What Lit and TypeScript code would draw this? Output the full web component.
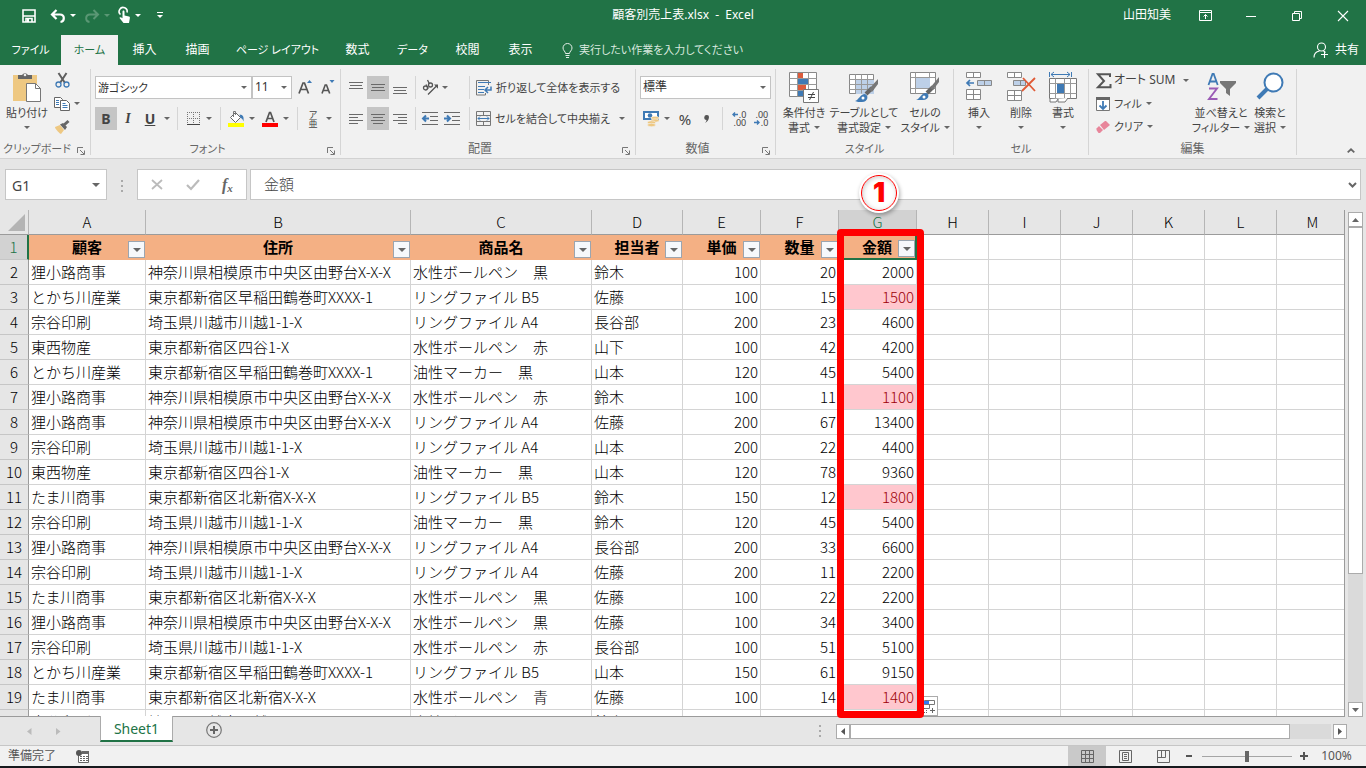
import { LitElement, html, css, svg } from 'lit';
import { customElement, state } from 'lit/decorators.js';
import { classMap } from 'lit/directives/class-map.js';

type Row = [string, string, string, string, number, number, number];

const MINO = '狸小路商事';
const TOKA = 'とかち川産業';
const SOYA = '宗谷印刷';
const TOZAI = '東西物産';
const TAMA = 'たま川商事';
const KANAGAWA = '神奈川県相模原市中央区由野台X-X-X';
const WASEDA = '東京都新宿区早稲田鶴巻町XXXX-1';
const KAWAGOE = '埼玉県川越市川越1-1-X';
const YOTSUYA = '東京都新宿区四谷1-X';
const KITA = '東京都新宿区北新宿X-X-X';

const HEADERS = ['顧客', '住所', '商品名', '担当者', '単価', '数量', '金額'];
const COLUMNS = ['A', 'B', 'C', 'D', 'E', 'F', 'G', 'H', 'I', 'J', 'K', 'L', 'M'];

const ROWS: Row[] = [
  [MINO, KANAGAWA, '水性ボールペン　黒', '鈴木', 100, 20, 2000],
  [TOKA, WASEDA, 'リングファイル B5', '佐藤', 100, 15, 1500],
  [SOYA, KAWAGOE, 'リングファイル A4', '長谷部', 200, 23, 4600],
  [TOZAI, YOTSUYA, '水性ボールペン　赤', '山下', 100, 42, 4200],
  [TOKA, WASEDA, '油性マーカー　黒', '山本', 120, 45, 5400],
  [MINO, KANAGAWA, '水性ボールペン　赤', '鈴木', 100, 11, 1100],
  [MINO, KANAGAWA, 'リングファイル A4', '佐藤', 200, 67, 13400],
  [SOYA, KAWAGOE, 'リングファイル A4', '山本', 200, 22, 4400],
  [TOZAI, YOTSUYA, '油性マーカー　黒', '山本', 120, 78, 9360],
  [TAMA, KITA, 'リングファイル B5', '鈴木', 150, 12, 1800],
  [SOYA, KAWAGOE, '油性マーカー　黒', '鈴木', 120, 45, 5400],
  [MINO, KANAGAWA, 'リングファイル A4', '長谷部', 200, 33, 6600],
  [SOYA, KAWAGOE, 'リングファイル A4', '佐藤', 200, 11, 2200],
  [TAMA, KITA, '水性ボールペン　黒', '佐藤', 100, 22, 2200],
  [MINO, KANAGAWA, '水性ボールペン　黒', '佐藤', 100, 34, 3400],
  [SOYA, KAWAGOE, '水性ボールペン　赤', '長谷部', 100, 51, 5100],
  [TOKA, WASEDA, 'リングファイル B5', '山本', 150, 61, 9150],
  [TAMA, KITA, '水性ボールペン　青', '佐藤', 100, 14, 1400],
  [SOYA, KAWAGOE, '水性ボールペン　黒', '鈴木', 100, 33, 3300],
];

const G = '#6a6a6a';
const B = '#3f7ab5';

const icon = (w: number, h: number, body: unknown) =>
  html`<svg width=${w} height=${h} viewBox="0 0 ${w} ${h}" fill="none" aria-hidden="true">${body}</svg>`;

const caret = html`<svg class="caret" width="6" height="3" viewBox="0 0 6 3" aria-hidden="true"><path d="M0 0h6L3 3z" fill="currentColor"/></svg>`;

const lines = (spec: [number, number, number][]) =>
  svg`${spec.map(([x, y, w]) => svg`<path d="M${x} ${y}.5h${w}" stroke=${G}/>`)}`;

const launcherIcon = icon(8, 8, svg`<path d="M.5 6V.5H6M3 3l4 4M7.5 3.5v4h-4" stroke="#777"/>`);

const icons = {
  save: icon(14, 14, svg`<path d="M1 1h12v12H1z" stroke="#fff" stroke-width="1.6"/><path d="M1 7h12M4 13v-3.500h6V13" stroke="#fff" stroke-width="1.6"/><path d="M5 10h2v3H5z" fill="#fff"/>`),
  undo: icon(16, 14, svg`<path d="M6.500 1 2 5.500 6.500 10M2.500 5.500H10c5 0 5 7 .5 7.500" stroke="#fff" stroke-width="2.200"/>`),
  redo: icon(16, 14, svg`<path d="M9.500 1 14 5.500 9.500 10M13.500 5.500H6c-5 0-5 7-.5 7.500" stroke="#5a9774" stroke-width="2"/>`),
  touch: icon(13, 17, svg`<path d="M2.500 7.500A4 4 0 1 1 9 5.500" stroke="#fff" stroke-width="1.600"/><path d="M4.500 4.500c0-1.500 2-1.500 2 0v4l4.500 1c1 .3 1 1 .8 2L11 16H5.500L1.500 11c0-1.300 1.500-1 3 .3z" fill="#fff"/>`),
  quick: icon(6, 7, svg`<path d="M0 .5h6" stroke="#fff"/><path d="M0 3h6L3 6z" fill="#fff"/>`),
  ribbonOpt: icon(13, 11, svg`<path d="M.5.5h12v10H.5zM.5 2.500h12M6.500 9V4.500M4.500 6.500l2-2 2 2" stroke="#fff"/>`),
  min: icon(10, 10, svg`<path d="M0 5.500h10" stroke="#fff"/>`),
  restore: icon(10, 10, svg`<path d="M.5 2.500h7v7h-7zM2.500 2V.5h7v7H8" stroke="#fff"/>`),
  close: icon(10, 10, svg`<path d="m0 0 10 10M10 0 0 10" stroke="#fff" stroke-width="1.100"/>`),
  bulb: icon(11, 15, svg`<path d="M3.500 10.500c0-2-2.500-3-2.500-5.500a4.500 4.500 0 0 1 9 0c0 2.500-2.500 3.500-2.500 5.500zM3.500 12.500h4M4 14.500h3" stroke="#e4efe8"/>`),
  share: icon(16, 16, svg`<circle cx="8.500" cy="5" r="4" stroke="#fff" stroke-width="1.100"/><path d="M1 15.500c0-3.500 2.500-6 5.500-6.500M10.500 9l2 1.500M8 12.500h7M11.500 9v7" stroke="#fff" stroke-width="1.100"/>`),
  paste: icon(30, 31, svg`<path d="M1 3h24v26H1z" fill="#eec882"/><path d="M6 7V3h4a3.500 3.500 0 0 1 6 0h4v4z" fill="#666"/><circle cx="13" cy="3" r="1.300" fill="#eee"/><path d="M14.500 11.500h9l5 5v13h-14z" fill="#fff" stroke="#777"/><path d="M23.500 11.500v5h5" stroke="#777"/>`),
  cut: icon(15, 15, svg`<path d="M3.500 0 10 10M11.500 0 5 10" stroke="#5f5f5f" stroke-width="2"/><circle cx="3.500" cy="11.500" r="2.500" stroke=${B} stroke-width="1.300"/><circle cx="11.500" cy="11.500" r="2.500" stroke=${B} stroke-width="1.300"/>`),
  copy: icon(16, 14, svg`<path d="M.5.5h6l2 2v8h-8z" fill="#fff" stroke="#666"/><path d="M6.500 3.500h6l3 3v7h-9z" fill="#fff" stroke="#666"/><path d="M2 3.500h3M2 5.500h3M2 7.500h3M8.500 6.500h3M8.500 8.500h5M8.500 10.500h5" stroke=${B}/>`),
  brush: icon(16, 14, svg`<path d="m1 7 5-2 4 5-3 4c-1 0-6-5-6-7z" fill="#eec882"/><path d="m6 4.500 3-1.500 4 4-2 3z" fill="#666"/><path d="m10 5 4.500-4" stroke="#666" stroke-width="3"/>`),
  growA: icon(15, 18, svg`<path d="m1 14.500 4-10.500h1.500l4 10.500M2.700 10.500h6.200" stroke="#555" stroke-width="1.700"/><path d="M9 4h5l-2.500-3z" fill=${B}/>`),
  shrinkA: icon(14, 18, svg`<path d="m1 14.500 3.200-8.500h1.300l3.200 8.500M2.500 11.500h4.800" stroke="#555" stroke-width="1.600"/><path d="M8.500 1h5L11 4z" fill=${B}/>`),
  border: icon(13, 13, svg`<path d="M0 .5h13M0 6.500h13M.5 0v12M6.500 0v12M12.500 0v12" stroke="#777" stroke-dasharray="1 1"/><path d="M0 12.500h13" stroke="#444"/>`),
  fill: icon(17, 16, svg`<path d="m2.500 6.500 5-5 5 5-5 5z" fill="#fff" stroke="#666"/><path d="M5.500 6V.5h2V4" stroke="#777"/><path d="M11.500 3.500c4 0 4.500 3 4 7-1-3-2-3.500-3-3.500z" fill=${B}/><path d="M0 12h16v4H0z" fill="#ff0"/>`),
  fontColor: icon(16, 16, svg`<path d="m4 11 3.500-9.500h1L12 11M5.500 7.500h5" stroke="#555" stroke-width="1.700"/><path d="M0 12h16v4H0z" fill="red"/>`),
  alTop: icon(14, 14, lines([[0, 1, 14], [1, 4, 12], [0, 7, 14]])),
  alMid: icon(14, 14, lines([[0, 3, 14], [1, 6, 12], [0, 9, 14]])),
  alBot: icon(14, 14, lines([[0, 6, 14], [1, 9, 12], [0, 12, 14]])),
  alL: icon(14, 12, lines([[0, 1, 14], [0, 4, 9], [0, 7, 14], [0, 10, 9]])),
  alC: icon(14, 12, lines([[0, 1, 14], [2, 4, 10], [0, 7, 14], [2, 10, 10]])),
  alR: icon(14, 12, lines([[0, 1, 14], [5, 4, 9], [0, 7, 14], [5, 10, 9]])),
  angle: icon(17, 16, svg`<g stroke="#555" stroke-width="1.300"><circle cx="3.500" cy="8" r="2"/><path d="m4 4.500 2.500 4"/><circle cx="8.500" cy="5" r="2"/><path d="m5.500 0 2 4M6 14.500 14.500 6"/></g><path d="M16 4.500v4.200l-4-4.200z" fill="#555"/>`),
  outdent: icon(16, 14, svg`${lines([[0, 0, 16], [8, 4, 8], [8, 8, 8], [0, 12, 16]])}<path d="M1 6.500h6M4 3.500l-3 3 3 3" stroke=${B} stroke-width="2"/>`),
  indent: icon(16, 14, svg`${lines([[0, 0, 16], [8, 4, 8], [8, 8, 8], [0, 12, 16]])}<path d="M0 6.500h6M3 3.500l3 3-3 3" stroke=${B} stroke-width="2"/>`),
  wrap: icon(16, 16, svg`<path d="M.5 5V.5h12V5" stroke="#777"/><path d="M2 2.500h13" stroke=${B}/><path d="M.5 5v10h9v-2" stroke="#777"/><path d="M2 6.500h7M2 9.500h6M2 12.500h6" stroke=${B}/><path d="M15 6.500v3.500h-5M12 7l-3 3 3 3" stroke=${B} stroke-width="1.500"/>`),
  merge: icon(15, 15, svg`<path d="M.5.500h14v14H.5zM.5 4.500h14M.5 10.500h14M7.500.5v4M7.500 10.500v4" stroke="#777"/><path d="M2 7.500h11M4 5.500l-2 2 2 2M11 5.500l2 2-2 2" stroke=${B}/>`),
  money: icon(17, 16, svg`<path d="M0 0h16v9H0z" fill=${B}/><path d="M2 2h12v5H2z" fill="#fff"/><circle cx="7" cy="4.500" r="2.300" fill=${B}/><g fill="#eec882" stroke="#f1f1f1" stroke-width=".6"><ellipse cx="12" cy="7" rx="4" ry="1.700"/><ellipse cx="12" cy="9.500" rx="4" ry="1.700"/><ellipse cx="8.500" cy="11.500" rx="4" ry="1.700"/><ellipse cx="8.500" cy="14" rx="4" ry="1.700"/></g>`),
  comma: icon(6, 10, svg`<path d="M3 1a2 2 0 0 1 2 2c0 3-2 5-4 6 1-1 1.500-2 1.500-3A2 2 0 0 1 3 1z" fill="#555"/>`),
  cond: icon(30, 31, svg`<path d="M.5.5h27v24H.5z" fill="#fff" stroke="#888"/><path d="M.5 6.500h27M.5 12.500h27M.5 18.500h27M8.500.5v24M19.500.5v24" stroke="#999"/><path d="M9 1h5v5H9zM9 13h8v5H9z" fill="#dc5c3c"/><path d="M9 7h10v5H9zM9 19h5v5H9z" fill=${B}/><path d="M14.500 17.500h15v13h-15z" fill="#fff" stroke="#777"/><path d="M19 22.500h7M19 25.500h7M24.500 20l-4 8" stroke="#444"/>`),
  table: icon(31, 31, svg`<path d="M.5 2.500h24v19H.5z" fill="#fff" stroke="#888"/><path d="M7 8h18v14H7z" fill="#bdd0e8"/><path d="M.5 7.500h24M.5 12.500h24M.5 17.500h24M6.500 2.500v19M12.500 2.500v19M18.500 2.500v19" stroke="#999"/><path d="m17 22 6-6" stroke="#666" stroke-width="4"/><path d="M20 17 29 7v5l-6 8z" fill="#777"/><path d="M6 29c4-1 5-7 10-7 4 1 3 8-3 8-3 0-5 0-7-1z" fill=${B}/><circle cx="14" cy="26" r="1.500" fill="#fff"/>`),
  cell: icon(31, 31, svg`<path d="M.5.500h25v21H.5z" fill="#fff" stroke="#888"/><path d="M.5 5.500h25M.5 16.500h25M5.500.5v21M19.500.5v21" stroke="#999"/><path d="M6 6h14v10H6z" fill="#bdd0e8"/><path d="m17 21 6-6" stroke="#666" stroke-width="4"/><path d="M20 16 29 5v5l-6 8z" fill="#777"/><path d="M6 28c4-1 5-7 10-7 4 1 3 7-3 7-3 0-5 0-7 0z" fill=${B}/><circle cx="14" cy="25" r="1.500" fill="#fff"/>`),
  insert: icon(28, 30, svg`<path d="M1.500.5h14v5h-14zM8.500.5v5M1.500 17.500h14v10h-14zM8.500 17.500v10M1.500 22.500h14" fill="#fff" stroke="#888"/><path d="M12.500 8.500h14v5h-14zM19.500 8.500v5" fill="#bdd0e8" stroke="#888"/><path d="M2 11h7M5 8l-3 3 3 3" stroke=${B} stroke-width="1.700"/>`),
  remove: icon(30, 30, svg`<path d="M1.500.5h14v5h-14zM8.500.5v5M1.500 18.500h14v10h-14zM8.500 18.500v10M1.500 23.500h14" fill="#fff" stroke="#888"/><path d="M7.500 8.500h12v5h-12zM14.500 8.500v5" fill="#bdd0e8" stroke="#888"/><path d="m17 6 12 13M29 6 16 19" stroke="#e05a36" stroke-width="1.800"/>`),
  format: icon(28, 31, svg`<path d="M.5 0v5M22.500 0v5M2 2.500h19M5 0 2 2.500 5 5M18 0l3 2.500L18 5" stroke=${B}/><path d="M.5 6.500h27v20H.5z" fill="#fff" stroke="#777"/><path d="M.5 11.500h27M.5 21.500h27M6.500 6.500v20M15.500 6.500v20M21.500 6.500v20" stroke="#999"/><path d="M8 12h7v9H8z" fill=${B}/><path d="M1 27v3h6l2-3v3h7l3-4" fill="#fff" stroke="#777"/>`),
  sigma: icon(15, 16, svg`<path d="M14 4V1.200H2L8 8l-6 6.300h12.500V11" stroke="#555" stroke-width="2"/>`),
  down: icon(14, 14, svg`<path d="M.5.5h13v13H.5z" fill="#fff" stroke="#777"/><path d="M0 0h14v3H0z" fill="#666"/><path d="M7 4v8M3.500 8.500 7 12l3.500-3.500" stroke=${B} stroke-width="1.800"/>`),
  eraser: icon(14, 12, svg`<path d="M9 0h1l4 4-6 5-4-5z" fill="#e8859a"/><path d="m3 5 4 4-3 3H2.500L.5 9V7.500z" fill="#e8859a"/>`),
  sort: icon(31, 31, svg`<path d="m2.500 13 4-11h1.200l4 11M4 9.500h6.500" stroke=${B} stroke-width="1.800"/><path d="M3 16.500h8L3 27h8.500" stroke="#9a5bb5" stroke-width="1.900"/><path d="M14 9h16v2l-6 6v7l-4-3v-4l-6-6z" fill="#777"/>`),
  find: icon(28, 28, svg`<circle cx="17.500" cy="10.500" r="9" fill="#fff" stroke=${B} stroke-width="2"/><path d="M11 17 2 26" stroke=${B} stroke-width="4"/>`),
  collapse: icon(8, 5, svg`<path d="m.7 4.300 3.300-3 3.300 3" stroke="#666" stroke-width="1.800"/>`),
  x: icon(12, 11, svg`<path d="m1 1 10 9M11 1 1 10" stroke="#bbb" stroke-width="1.800"/>`),
  check: icon(14, 11, svg`<path d="m1 6 4 4 8-9" stroke="#bbb" stroke-width="2.200"/>`),
  expand: icon(9, 6, svg`<path d="m1 1 3.500 3.500L8 1" stroke="#666" stroke-width="2"/>`),
  add: icon(16, 16, svg`<circle cx="8" cy="8" r="7.300" stroke="#777" stroke-width="1.200"/><path d="M8 4v8M4 8h8" stroke="#666" stroke-width="2"/>`),
  macro: icon(13, 13, svg`<path d="M2.500 5v7.500h10v-11H6" fill="#fff" stroke="#666"/><path d="M6 1h7v3H6z" fill="#666"/><circle cx="3" cy="3" r="3" fill="#555"/><path d="M4 6.500h8M4 8.500h8M4 10.500h8" stroke="#666" stroke-dasharray="2 1"/>`),
  viewGrid: icon(13, 13, svg`<path d="M.5.5h12v12H.5zM4.500.5v12M8.500.5v12M.5 4.500h12M.5 8.500h12" stroke="#666"/>`),
  viewPage: icon(13, 13, svg`<path d="M.5.500h12v12H.5zM3.500 2.500h6v8h-6zM5 4.500h3M5 6.500h3M5 8.500h3" stroke="#666"/>`),
  viewBreak: icon(13, 13, svg`<path d="M.5.5h12v12H.5zM4.500.5v7M.5 7.500h8V.5" stroke="#666"/>`),
  smart: icon(14, 15, svg`<path d="M1.500 1.500h10v4h-10zM1.500 5.500h5v4h-5" stroke="#777"/><path d="M1 2h5v3H1z" fill="#3478f0"/><path d="M7 11.500h5M9.500 9v5M1 9.500h1M3 11.500h1M1 13.500h1M3 13.500h1" stroke="#666"/>`),
};

const select = (label: string, value: string) => html`
  <span class="combo">
    <select aria-label=${label}><option>${value}</option></select>${caret}
  </span>`;

const tool = (label: string, content: unknown, on = false) => html`
  <button class=${classMap({ tool: true, on })} title=${label} aria-label=${label}>${content}</button>`;

const big = (img: unknown, first: string, second: string) => html`
  <button class="big">
    <span class="big-icon">${img}</span>
    <span>${first}</span>
    <span class="big-second">${second}${caret}</span>
  </button>`;

const sep = html`<i class="sep"></i>`;

const isKana = (text: string) => /^[\u30a0-\u30ff ]+$/.test(text);

const groupLabel = (text: string, launcher = false) => html`
  <div class="group-label"><span class=${classMap({ kana: isKana(text) })}>${text}</span>${launcher
    ? html`<button class="launcher" aria-label="${text}の設定">${launcherIcon}</button>` : ''}</div>`;

const base = css`
  :host, * { box-sizing: border-box; }
  button, input, select {
    font: inherit; color: inherit; font-feature-settings: inherit;
    border: 0; margin: 0; padding: 0; background: none; border-radius: 0; outline: 0;
  }
  svg { display: block; flex: none; overflow: visible; }
  .caret { color: #666; }
  .kana { font-size: 11px; }
`;

@customElement('title-bar')
class TitleBar extends LitElement {
  static styles = [base, css`
    :host { display: block; background: #217346; color: #fff; }
    .title { display: grid; grid-template-columns: 1fr auto 1fr; align-items: center; height: 35px; }
    .quick { display: flex; align-items: center; padding: 0 0 4px 22px; gap: 8px; }
    .quick button { display: flex; align-items: center; gap: 4px; }
    .quick .save { margin-right: 6px; }
    .quick .more { margin-left: 8px; }
    .quick .caret { color: #fff; }
    .quick .dim .caret { color: #5a9774; }
    .name { white-space: pre; padding-bottom: 4px; }
    .window { display: flex; justify-content: flex-end; align-items: center; height: 31px; align-self: start; }
    .window button { height: 31px; }
    .user { margin-right: 11px; }
    .ctl { width: 46px; display: grid; place-items: center; }
    .tabs { display: grid; grid-template-columns: 61px 57px 53px 53px 107px 53px 57px 53px 53px 1fr auto; height: 30px; }
    .tab { text-align: center; white-space: nowrap; }
    .active { background: #f1f1f1; color: #217346; }
    .tell { display: flex; align-items: center; gap: 6px; padding-left: 15px; font-size: 11px; }
    .tell input { width: 200px; }
    .tell input::placeholder { color: #d8e8de; opacity: 1; }
    .share { display: flex; align-items: center; gap: 6px; padding-right: 7px; }
  `];
  render() {
    const tabs = ['ファイル', 'ホーム', '挿入', '描画', 'ページ レイアウト', '数式', 'データ', '校閲', '表示'];
    return html`
      <header class="title">
        <div class="quick">
          <button class="save" aria-label="上書き保存">${icons.save}</button>
          <button aria-label="元に戻す">${icons.undo}${caret}</button>
          <button class="dim" aria-label="やり直し">${icons.redo}${caret}</button>
          <button aria-label="タッチ/マウス モード">${icons.touch}${caret}</button>
          <button class="more" aria-label="クイック アクセス">${icons.quick}</button>
        </div>
        <div class="name">顧客別売上表.xlsx  -  Excel</div>
        <div class="window">
          <button class="user">山田知美</button>
          <button class="ctl" aria-label="リボンの表示">${icons.ribbonOpt}</button>
          <button class="ctl" aria-label="最小化">${icons.min}</button>
          <button class="ctl" aria-label="元のサイズ">${icons.restore}</button>
          <button class="ctl" aria-label="閉じる">${icons.close}</button>
        </div>
      </header>
      <nav class="tabs">
        ${tabs.map((t, i) => html`<button class=${classMap({ tab: true, active: i === 1, kana: isKana(t) })}>${t}</button>`)}
        <label class="tell">${icons.bulb}<input aria-label="操作アシスト" placeholder="実行したい作業を入力してください"></label>
        <button class="share">${icons.share}共有</button>
      </nav>`;
  }
}

@customElement('ribbon-bar')
class RibbonBar extends LitElement {
  static styles = [base, css`
    :host { display: flex; height: 94px; background: #f1f1f1; border-bottom: 1px solid #d2d2d2; color: #444; padding-top: 4px; }
    .group { display: flex; flex-direction: column; height: 86px; border-right: 1px solid #d5d5d5; flex: none; }
    .body { flex: 1; display: flex; }
    .group-label { display: flex; height: 14px; align-items: center; color: #666; margin-bottom: -1px; }
    .group-label span { flex: 1; text-align: center; }
    .launcher { width: 16px; display: grid; place-items: center start; padding: 3px 0 0 3px; }
    .clip { width: 91px; }
    .font { width: 250px; }
    .align { width: 295px; }
    .number { width: 140px; }
    .style { width: 178px; }
    .cells { width: 135px; }
    .edit { width: 208px; }
    .stack { display: grid; grid-auto-rows: 23px; row-gap: 8px; align-content: start; padding: 7px 0 0 4px; }
    .row { display: grid; }
    .tool { display: grid; place-items: center; white-space: nowrap; }
    .on { background: #c5c5c5; }
    .sep { width: 1px; background: #d5d5d5; justify-self: center; }
    .combo { display: grid; grid-template-columns: 100%; align-items: center; background: #fff; border: 1px solid #c3c3c3; }
    .combo > * { grid-area: 1 / 1; }
    .combo select { appearance: none; width: 100%; height: 21px; padding-left: 2px; color: #333; }
    .combo .caret { justify-self: end; margin-right: 4px; pointer-events: none; }
    .font-a { grid-template-columns: 157px 40px 26px 20px; }
    .font-a .combo { font-size: 11px; }
    .font-a .combo + .combo { font-size: 12px; }
    .font-b { grid-template-columns: 22px 22px 22px 12px 8px 24px 8px 14px 18px 14px 22px 10px 12px 20px 12px; }
    .bold { font: bold 14px 'Noto Sans', sans-serif; }
    .italic { font: italic bold 14px 'Liberation Serif', serif; }
    .underline { font: bold 14px 'Noto Sans', sans-serif; text-decoration: underline; }
    .ruby { font-size: 9px; line-height: 9px; width: 10px; white-space: normal; }
    .aligns { grid-template-columns: 22px 22px 22px 8px 22px 22px 12px 1fr 18px; padding-right: 4px; }
    .textual { display: flex; align-items: center; gap: 4px; white-space: nowrap; padding-left: 1px; font-size: 11px; }
    .wide { grid-column: span 2; }
    .number-a { grid-template-columns: 131px; }
    .number-b { grid-template-columns: 22px 10px 26px 18px 12px 22px 22px; }
    .percent { font: 15px 'Noto Sans', sans-serif; }
    .decimal { font: 9px/8px 'Noto Sans', sans-serif; text-align: right; }
    .decimal span { display: flex; align-items: center; justify-content: flex-end; gap: 1px; height: 8px; }
    .bigs { padding-left: 3px; }
    .big { display: flex; flex-direction: column; align-items: center; line-height: 15px; flex: 1; white-space: nowrap; height: 66px; margin-top: 3px; font-size: 11px; }
    .big-icon { height: 32px; display: grid; align-items: start; margin-bottom: 1px; }
    .big-second { display: flex; align-items: center; gap: 4px; height: 15px; }
    .style-body { display: grid; grid-template-columns: 50px 70px 52px; }
    .cells-body { display: grid; grid-template-columns: 42px 42px 42px; padding-left: 4px; }
    .clip-body { display: grid; grid-template-columns: 54px 16px 14px; }
    .clip-small { display: grid; grid-auto-rows: 23px; }
    .edit-body { display: grid; grid-template-columns: 102px 54px 44px; padding-left: 3px; }
    .edit-small { display: grid; grid-auto-rows: 23px; padding-left: 4px; }
    .edit-small button { display: flex; align-items: center; gap: 4px; font-size: 11px; }
    .edit-small .far { justify-content: space-between; padding-right: 5px; font-size: 12px; }
    .edit-small .far span { display: flex; gap: 3px; align-items: center; }
    .rest { flex: 1; display: flex; justify-content: flex-end; align-items: flex-end; padding: 0 11px 5px; }
  `];
  render() {
    const left = icon(6, 5, svg`<path d="M6 2.500H1M3 .5l-2 2 2 2" stroke="#3f7ab5" stroke-width="1.400"/>`);
    const right = icon(6, 5, svg`<path d="M0 2.500h5M3 .5l2 2-2 2" stroke="#3f7ab5" stroke-width="1.400"/>`);
    return html`
      <section class="group clip">
        <div class="body clip-body">
          ${big(icons.paste, '貼り付け', '')}
          <div class="clip-small">${tool('切り取り', icons.cut)}${tool('コピー', icons.copy)}${tool('書式のコピー', icons.brush)}</div>
          <div class="clip-small"><span></span>${tool('コピー オプション', caret)}</div>
        </div>
        ${groupLabel('クリップボード', true)}
      </section>
      <section class="group font">
        <div class="body stack">
          <div class="row font-a">${select('フォント', '游ゴシック')}${select('サイズ', '11')}${tool('拡大', icons.growA)}${tool('縮小', icons.shrinkA)}</div>
          <div class="row font-b">
            ${tool('太字', html`<span class="bold">B</span>`, true)}
            ${tool('斜体', html`<span class="italic">I</span>`)}
            ${tool('下線', html`<span class="underline">U</span>`)}
            ${tool('下線の種類', caret)}${sep}
            ${tool('罫線', icons.border)}${tool('罫線の種類', caret)}${sep}
            ${tool('塗りつぶし', icons.fill)}${tool('塗りつぶしの色', caret)}
            ${tool('文字の色', icons.fontColor)}${tool('文字色の選択', caret)}${sep}
            ${tool('ふりがな', html`<span class="ruby">ア亜</span>`)}${tool('ふりがなの設定', caret)}
          </div>
        </div>
        ${groupLabel('フォント', true)}
      </section>
      <section class="group align">
        <div class="body stack">
          <div class="row aligns">
            ${tool('上揃え', icons.alTop)}${tool('上下中央揃え', icons.alMid, true)}${tool('下揃え', icons.alBot)}${sep}
            ${tool('方向', icons.angle)}<span class="textual">${caret}</span>${sep}
            <button class="textual wide">${icons.wrap}折り返して全体を表示する</button>
          </div>
          <div class="row aligns">
            ${tool('左揃え', icons.alL)}${tool('中央揃え', icons.alC, true)}${tool('右揃え', icons.alR)}${sep}
            ${tool('インデントを減らす', icons.outdent)}${tool('インデントを増やす', icons.indent)}${sep}
            <button class="textual">${icons.merge}セルを結合して中央揃え</button>${tool('結合の種類', caret)}
          </div>
        </div>
        ${groupLabel('配置', true)}
      </section>
      <section class="group number">
        <div class="body stack">
          <div class="row number-a">${select('表示形式', '標準')}</div>
          <div class="row number-b">
            ${tool('通貨', icons.money)}${tool('通貨の種類', caret)}
            ${tool('パーセント', html`<span class="percent">%</span>`)}${tool('桁区切り', icons.comma)}${sep}
            ${tool('小数点以下を増やす', html`<span class="decimal"><span>${left}.0</span><span>.00</span></span>`)}
            ${tool('小数点以下を減らす', html`<span class="decimal"><span>.00</span><span>${right}.0</span></span>`)}
          </div>
        </div>
        ${groupLabel('数値', true)}
      </section>
      <section class="group style">
        <div class="body bigs style-body">
          ${big(icons.cond, '条件付き', '書式')}${big(icons.table, 'テーブルとして', '書式設定')}${big(icons.cell, 'セルの', 'スタイル')}
        </div>
        ${groupLabel('スタイル')}
      </section>
      <section class="group cells">
        <div class="body bigs cells-body">
          ${big(icons.insert, '挿入', '')}${big(icons.remove, '削除', '')}${big(icons.format, '書式', '')}
        </div>
        ${groupLabel('セル')}
      </section>
      <section class="group edit">
        <div class="body bigs edit-body">
          <div class="edit-small">
            <button class="far"><span>${icons.sigma}オート SUM</span>${caret}</button>
            <button>${icons.down}フィル${caret}</button>
            <button>${icons.eraser}クリア${caret}</button>
          </div>
          ${big(icons.sort, '並べ替えと', 'フィルター')}${big(icons.find, '検索と', '選択')}
        </div>
        ${groupLabel('編集')}
      </section>
      <div class="rest"><button aria-label="リボンを折りたたむ">${icons.collapse}</button></div>`;
  }
}

@customElement('formula-bar')
class FormulaBar extends LitElement {
  static styles = [base, css`
    :host { display: flex; align-items: center; height: 51px; padding: 0 5px; color: #444; font-size: 14px; }
    .box { display: flex; align-items: center; height: 31px; background: #fff; border: 1px solid #c6c6c6; }
    .cell { width: 102px; padding: 0 6px; }
    .cell input { flex: 1; min-width: 0; padding-top: 3px; }
    .cell svg { width: 8px; height: 4px; }
    .dots { width: 30px; display: grid; place-items: center; color: #aaa; }
    .keys { width: 110px; margin-right: 3px; justify-content: space-around; padding: 0 2px; }
    .fx { font: italic bold 16px 'Liberation Serif', serif; color: #666; }
    .fx sub { font-size: 11px; vertical-align: -2px; line-height: 0; }
    .text { flex: 1; padding: 0 3px 0 13px; }
    .text input { flex: 1; font-size: 15px; height: 29px; font-weight: 300; padding-bottom: 2px; }
  `];
  render() {
    return html`
      <div class="box cell"><input aria-label="名前ボックス" value="G1">${caret}</div>
      <div class="dots">${icon(2, 12, svg`<path d="M1 1v12" stroke="#aaa" stroke-width="2" stroke-dasharray="2 3"/>`)}</div>
      <div class="box keys">
        <button aria-label="キャンセル">${icons.x}</button>
        <button aria-label="入力">${icons.check}</button>
        <button class="fx" aria-label="関数の挿入">f<sub>x</sub></button>
      </div>
      <div class="box text"><input aria-label="数式バー" value="金額"><button aria-label="展開">${icons.expand}</button></div>`;
  }
}

@customElement('sheet-grid')
class SheetGrid extends LitElement {
  static styles = [base, css`
    :host { display: flex; flex: 1; min-height: 0; position: relative; font-family: 'Noto Sans CJK JP', sans-serif; font-size: 15px; color: #000; font-feature-settings: normal; }
    .view { flex: 1; min-width: 0; overflow: hidden; border-right: 1px solid #9b9b9b; border-bottom: 1px solid #9b9b9b; }
    table { table-layout: fixed; width: calc(100% + 4px); border-collapse: separate; border-spacing: 0; background: #fff; }
    .c-head { width: 29px; } .c-a { width: 117px; } .c-b { width: 265px; } .c-c { width: 181px; }
    .c-d { width: 91px; } .c-num { width: 78px; } .c-blank { width: 72px; }
    th, td { height: 25px; padding: 0 2px; line-height: 22px; white-space: nowrap; overflow: hidden; border-right: 1px solid #d4d4d4; border-bottom: 1px solid #d4d4d4; }
    th, td { font-weight: 300; }
    tr > :last-child { border-right: 0; }
    .letter { background: #e6e6e6; border-color: #b5b5b5; border-bottom-color: #9b9b9b; padding: 0; }
    .index { background: #e6e6e6; border-right-color: #9b9b9b; border-bottom-color: #c6c6c6; padding: 0; }
    .sel { background: #d2d2d2; color: #217346; }
    .index.sel { border-right: 2px solid #217346; }
    .corner svg { margin: 0 3px 0 auto; }
    .field { position: relative; background: #f4b084; border-color: #f4b084; font-weight: 700; }
    .current { border-right: 2px solid #217346; border-bottom: 2px solid #217346; }
    .filter { position: absolute; right: 0; bottom: 1px; width: 17px; height: 17px; background: #f6f8fb; border: 1px solid #9ba5b0; display: grid; place-items: center; }
    .filter svg { width: 8px; height: 4px; }
    .num { text-align: right; }
    .low { background: #ffc7ce; color: #9c0006; }
    .scroll { width: 21px; padding: 2px 3px 0; display: flex; flex-direction: column; align-items: center; }
    .scroll button, .thumb { width: 15px; border: 1px solid #ababab; background: #fff; display: grid; place-items: center; }
    .scroll button { height: 15px; }
    .thumb { flex: 347; }
    .track { flex: 129; width: 15px; background: #dadada; }
    .frame { position: absolute; left: 837px; top: 19px; width: 87px; bottom: -1px; border: 7px solid #f00; border-radius: 4px; pointer-events: none; }
    .badge { position: absolute; left: 859px; top: -37px; width: 40px; height: 40px; border-radius: 50%; background: #fff; padding: 2px; box-shadow: 1px 2px 4px #0005; }
    .ring { display: grid; place-items: center; height: 36px; border: 1px solid #f00; border-radius: 50%; color: #f00; font: 900 27px/34px Inter, sans-serif; box-shadow: inset 1px 1px 5px #0003; }
    .smart { position: absolute; left: 922px; bottom: 1px; width: 16px; height: 20px; background: #fff; border: 1px solid #ababab; display: grid; place-items: center; }
  `];
  render() {
    const up = icon(7, 4, svg`<path d="M0 4h7L3.500 0z" fill="#666"/>`);
    const dn = icon(7, 4, svg`<path d="M0 0h7L3.500 4z" fill="#666"/>`);
    const blanks = COLUMNS.slice(7);
    return html`
      <div class="view">
        <table>
          <colgroup>
            <col class="c-head"><col class="c-a"><col class="c-b"><col class="c-c"><col class="c-d">
            <col class="c-num"><col class="c-num"><col class="c-num">
            <col class="c-blank"><col class="c-blank"><col class="c-blank"><col class="c-blank"><col class="c-blank"><col>
          </colgroup>
          <thead>
            <tr>
              <th class="letter corner">${icon(17, 17, svg`<path d="M17 0v17H0z" fill="#b4b4b4"/>`)}</th>
              ${COLUMNS.map((c) => html`<th scope="col" class=${classMap({ letter: true, sel: c === 'G' })}>${c}</th>`)}
            </tr>
          </thead>
          <tbody>
            <tr>
              <th scope="row" class="index sel">1</th>
              ${HEADERS.map((h, i) => html`<th class=${classMap({ field: true, current: i === 6 })}>${h}<button class="filter" aria-label="${h}のフィルター">${caret}</button></th>`)}
              ${blanks.map(() => html`<td></td>`)}
            </tr>
            ${ROWS.map((r, n) => html`
              <tr>
                <th scope="row" class="index">${n + 2}</th>
                ${r.map((v, i) => html`<td class=${classMap({ num: i > 3, low: i === 6 && Number(v) < 2000 })}>${v}</td>`)}
                ${blanks.map(() => html`<td></td>`)}
              </tr>`)}
          </tbody>
        </table>
      </div>
      <div class="scroll">
        <button aria-label="上へ">${up}</button><div class="thumb"></div><div class="track"></div><button aria-label="下へ">${dn}</button>
      </div>
      <button class="smart" aria-label="クイック分析">${icons.smart}</button>
      <div class="frame"></div>
      <div class="badge"><div class="ring">1</div></div>`;
  }
}

@customElement('sheet-footer')
class SheetFooter extends LitElement {
  @state() zoom = 100;
  static styles = [base, css`
    :host { display: block; color: #555; }
    .tabs { display: flex; height: 28px; }
    .nav { width: 100px; display: flex; gap: 24px; padding: 11px 0 0 27px; align-items: flex-start; }
    .sheet { width: 73px; height: 26px; margin-top: -1px; background: #fff; border: 1px solid #ababab; border-top: 0; border-bottom: 2px solid #217346; color: #217346; font: 14px 'Noto Sans', sans-serif; position: relative; }
    .add { margin: 0 0 2px 33px; }
    .space { flex: 1; }
    .dots { padding: 8px 15px 0 0; }
    .hscroll { display: flex; flex: none; width: 38%; max-width: 511px; height: 15px; margin: 7px 19px 0 0; }
    .hscroll button { width: 14px; border: 1px solid #ababab; background: #fff; display: grid; place-items: center; }
    .thumb { flex: 439; border: 1px solid #ababab; background: #fff; }
    .track { flex: 41; background: #dadada; margin-right: 2px; }
    .status { display: flex; align-items: center; height: 21px; border-top: 1px solid #c6c6c6; background: #f1f1f1; padding-left: 8px; }
    .macro { margin-left: 20px; }
    .view { width: 38px; height: 20px; display: grid; place-items: center; }
    .on { background: #c9c9c9; }
    .sign { width: 14px; display: grid; place-items: center; }
    input[type='range'] { appearance: none; width: 101px; height: 12px; background: linear-gradient(#a5a5a5, #a5a5a5) center / 90px 1px no-repeat; }
    input[type='range']::-webkit-slider-thumb { appearance: none; width: 4px; height: 11px; background: #666; }
    .pct { width: 55px; padding-right: 4px; text-align: center; }
    .edge { height: 2px; background: #16191d; }
  `];
  render() {
    return html`
      <div class="tabs">
        <div class="nav">
          ${icon(5, 7, svg`<path d="M4.500 0v7L0 3.500z" fill="#bbb"/>`)}${icon(5, 7, svg`<path d="M0 0v7l4.500-3.500z" fill="#bbb"/>`)}
        </div>
        <button class="sheet">Sheet1</button>
        <button class="add" aria-label="新しいシート">${icons.add}</button>
        <span class="space"></span>
        <span class="dots">${icon(2, 12, svg`<path d="M1 0v12" stroke="#aaa" stroke-width="2" stroke-dasharray="2 3"/>`)}</span>
        <div class="hscroll">
          <button aria-label="左へ">${icon(4, 7, svg`<path d="M4 0v7L0 3.500z" fill="#555"/>`)}</button>
          <div class="thumb"></div><div class="track"></div>
          <button aria-label="右へ">${icon(4, 7, svg`<path d="M0 0v7l4-3.500z" fill="#555"/>`)}</button>
        </div>
      </div>
      <div class="status">
        <span>準備完了</span>
        <button class="macro" aria-label="マクロの記録">${icons.macro}</button>
        <span class="space"></span>
        <button class="view on" aria-label="標準">${icons.viewGrid}</button>
        <button class="view" aria-label="ページ レイアウト">${icons.viewPage}</button>
        <button class="view" aria-label="改ページ プレビュー">${icons.viewBreak}</button>
        <button class="sign" aria-label="縮小">${icon(6, 8, svg`<path d="M0 4h6" stroke="#555" stroke-width="2"/>`)}</button>
        <input type="range" aria-label="ズーム" min="0" max="200" .value=${String(this.zoom)}>
        <button class="sign" aria-label="拡大">${icon(8, 8, svg`<path d="M0 4h8M4 0v8" stroke="#555" stroke-width="2"/>`)}</button>
        <span class="pct">${this.zoom}%</span>
      </div>
      <div class="edge"></div>`;
  }
}

@customElement('app-root')
class AppRoot extends LitElement {
  static styles = css`
    :host {
      display: flex; flex-direction: column; height: 100vh; overflow: hidden; background: #e6e6e6;
      font-family: 'Noto Sans', 'Noto Sans CJK JP', sans-serif; font-size: 12px; line-height: 1.2;
      font-feature-settings: 'palt';
    }
  `;
  render() {
    return html`
      <title-bar></title-bar>
      <ribbon-bar></ribbon-bar>
      <formula-bar></formula-bar>
      <sheet-grid></sheet-grid>
      <sheet-footer></sheet-footer>`;
  }
}
